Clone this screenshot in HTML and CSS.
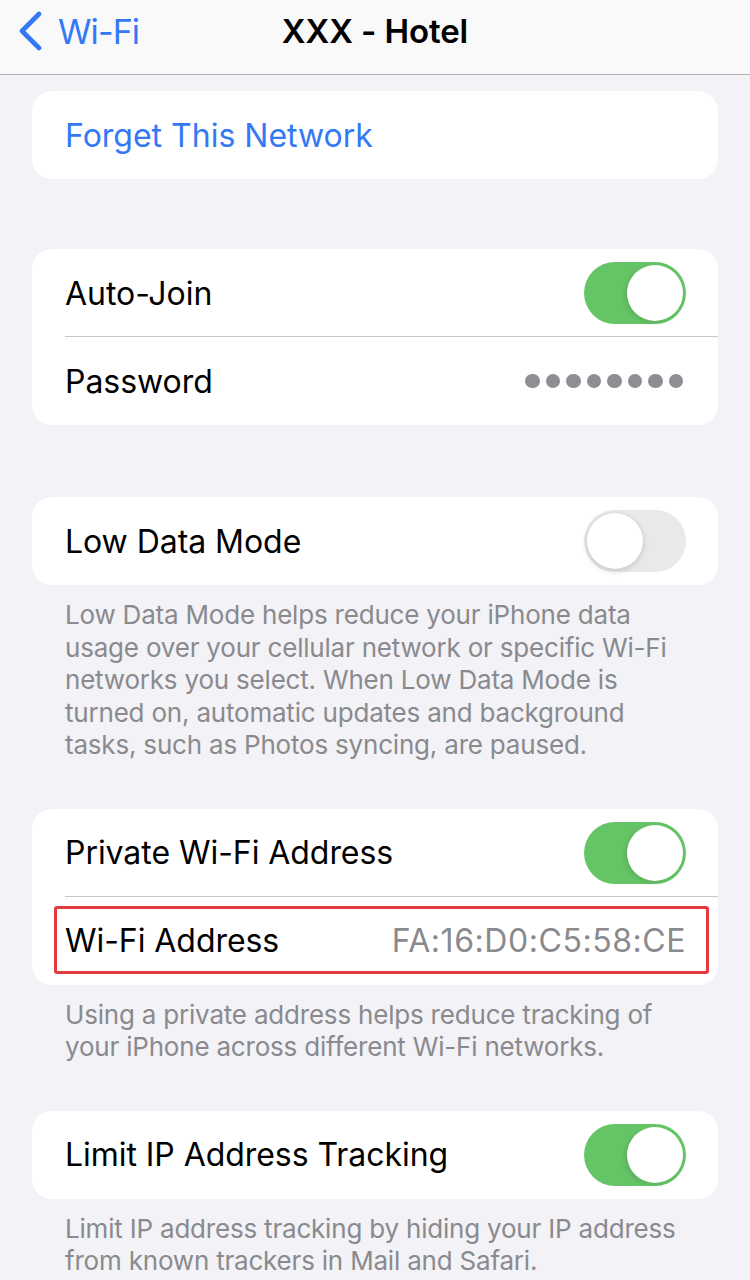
FILE: index.html
```html
<!DOCTYPE html>
<html lang="en">
<head>
<meta charset="utf-8">
<title>XXX - Hotel</title>
<link rel="stylesheet" href="styles.css">
</head>
<body>
<header class="nav">
  <div class="nav-back">
    <svg class="chev" width="26" height="40" viewBox="0 0 26 40"><path d="M22 3 L5 20 L22 37" fill="none" stroke="#3478f6" stroke-width="4.6" stroke-linecap="round" stroke-linejoin="round"/></svg>
    <span class="nav-back-label">Wi-Fi</span>
  </div>
  <div class="nav-title">XXX - Hotel</div>
</header>

<main class="content">
  <section class="group g-forget">
    <div class="row"><span class="link">Forget This Network</span></div>
  </section>

  <section class="group g-join">
    <div class="row row-sep">
      <span class="label">Auto-Join</span>
      <span class="toggle on"><span class="knob"></span></span>
    </div>
    <div class="row">
      <span class="label">Password</span>
      <span class="dots"><i></i><i></i><i></i><i></i><i></i><i></i><i></i><i></i></span>
    </div>
  </section>

  <section class="group g-low">
    <div class="row">
      <span class="label">Low Data Mode</span>
      <span class="toggle off"><span class="knob"></span></span>
    </div>
  </section>
  <p class="note">Low Data Mode helps reduce your iPhone data usage over your cellular network or specific Wi-Fi networks you select. When Low Data Mode is turned on, automatic updates and background tasks, such as Photos syncing, are paused.</p>

  <section class="group g-private">
    <div class="row row-sep">
      <span class="label">Private Wi-Fi Address</span>
      <span class="toggle on"><span class="knob"></span></span>
    </div>
    <div class="row row-addr">
      <span class="label">Wi-Fi Address</span>
      <span class="value">FA:16:D0:C5:58:CE</span>
      <span class="highlight"></span>
    </div>
  </section>
  <p class="note">Using a private address helps reduce tracking of your iPhone across different Wi-Fi networks.</p>

  <section class="group g-limit">
    <div class="row">
      <span class="label">Limit IP Address Tracking</span>
      <span class="toggle on"><span class="knob"></span></span>
    </div>
  </section>
  <p class="note">Limit IP address tracking by hiding your IP address from known trackers in Mail and Safari.</p>
</main>
</body>
</html>
```

FILE: styles.css
```css
* { box-sizing: border-box; }
html, body { margin: 0; padding: 0; }
body {
  width: 750px;
  height: 1280px;
  overflow: hidden;
  background: #f2f2f7;
  font-family: Inter, "Noto Sans", "Liberation Sans", sans-serif;
  color: #000;
  -webkit-font-smoothing: antialiased;
}

.nav {
  height: 75px;
  background: #f9f9f9;
  border-bottom: 1px solid #b4b4b6;
  display: flex;
  align-items: center;
  justify-content: center;
  position: relative;
}
.nav-back {
  position: absolute;
  left: 17px;
  top: 10px;
  display: flex;
  align-items: center;
  gap: 15px;
  height: 42px;
}
.chev { display: block; }
.nav-back-label {
  color: #3478f6;
  font-size: 34px;
  letter-spacing: -0.9px;
}
.nav-title {
  font-size: 33px;
  font-weight: 600;
  letter-spacing: -0.1px;
  margin-top: -13px;
}

.content {
  padding: 16px 32px 0 32px;
}

.group {
  background: #fff;
  border-radius: 20px;
}
.g-forget { margin-bottom: 70px; }
.g-join { margin-bottom: 72px; }

.row {
  height: 88px;
  display: flex;
  align-items: center;
  justify-content: space-between;
  padding: 0 32px 0 33px;
  position: relative;
}
.row-sep::after {
  content: "";
  position: absolute;
  left: 33px;
  right: 0;
  bottom: 0;
  height: 1px;
  background: #c8c8cc;
}
.label, .link {
  font-size: 32px;
  letter-spacing: -0.05px;
}
.link { color: #3478f6; letter-spacing: 0; }
.value {
  font-size: 32px;
  color: #8a8a8e;
  letter-spacing: 0.55px;
}

.toggle {
  width: 102px;
  height: 62px;
  border-radius: 31px;
  position: relative;
  flex: none;
}
.toggle.on { background: #65c466; }
.toggle.off { background: #e9e9ea; }
.toggle .knob {
  position: absolute;
  top: 3px;
  width: 56px;
  height: 56px;
  border-radius: 50%;
  background: #fff;
}
.toggle.on .knob {
  right: 3px;
  box-shadow: -2px 2px 5px rgba(0,0,0,0.10);
}
.toggle.off .knob {
  left: 3px;
  box-shadow: 0 2px 6px rgba(0,0,0,0.16), 0 0 1px rgba(0,0,0,0.08);
}

.dots {
  display: flex;
  gap: 6px;
  margin-right: 3px;
}
.dots i {
  display: block;
  width: 14.5px;
  height: 14.5px;
  border-radius: 50%;
  background: #8e8e93;
}

.highlight {
  position: absolute;
  left: 22px;
  right: 9px;
  top: 9px;
  bottom: 11px;
  border: 3px solid #e5383f;
  border-radius: 3px;
  pointer-events: none;
}

.note {
  margin: 0 0 47px 0;
  padding: 14px 33px 0 33px;
  font-size: 26px;
  line-height: 32.5px;
  color: #8a8a8e;
  letter-spacing: -0.2px;
}
```
